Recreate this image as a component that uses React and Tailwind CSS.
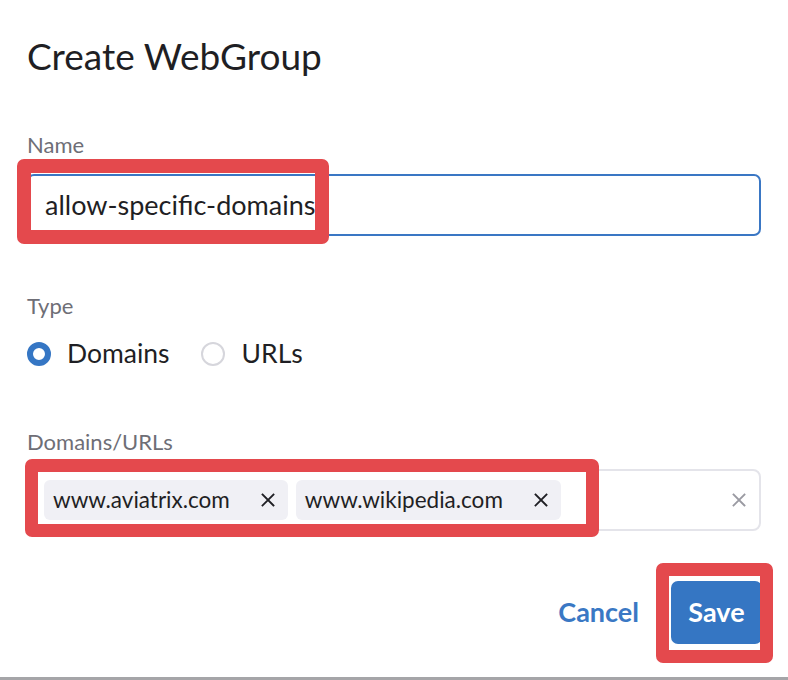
import React from "react";

function X({ className }) {
  return (
    <svg className={className} viewBox="0 0 14 14" fill="none" stroke="currentColor" strokeWidth="1.8" strokeLinecap="square">
      <path d="M1.5 1.5 L12.5 12.5 M12.5 1.5 L1.5 12.5" />
    </svg>
  );
}

function Chip({ label }) {
  return (
    <div className="flex h-[40px] items-center rounded-[6px] bg-[#f0f0f5] pl-[9px] pr-[13px]">
      <span className="text-[22.5px] text-[#1f1f24]">{label}</span>
      <X className="ml-[31px] h-[14px] w-[14px] text-[#1f1f24]" />
    </div>
  );
}

export default function App() {
  return (
    <div
      className="relative h-[680px] w-[788px] overflow-hidden bg-white"
      style={{ fontFamily: "Lato, 'Noto Sans', sans-serif" }}
    >
      <div className="flex flex-col pl-[27px] pr-[27px]">
        <h1 className="mt-[34px] text-[37px] leading-[43px] font-normal text-[#1f1f24]">
          Create WebGroup
        </h1>

        <label className="mt-[55px] text-[22px] leading-[26px] text-[#6e6e76]">Name</label>
        <div className="mt-[16px] flex h-[62px] items-center rounded-[7px] border-2 border-[#3a77c4] pl-[16px]">
          <span className="text-[27px] text-[#1f1f24]">allow-specific-domains</span>
        </div>

        <label className="mt-[57px] text-[22px] leading-[26px] text-[#6e6e76]">Type</label>
        <div className="mt-[20px] flex h-[30px] items-center">
          <span className="h-[24px] w-[24px] rounded-full border-[6px] border-[#3576c4] bg-white" />
          <span className="ml-[16px] text-[26.5px] text-[#1f1f24]">Domains</span>
          <span className="ml-[31px] h-[24px] w-[24px] rounded-full border-2 border-[#d6d6dc] bg-white" />
          <span className="ml-[17px] text-[26.5px] text-[#1f1f24]">URLs</span>
        </div>

        <label className="mt-[60px] text-[22px] leading-[26px] text-[#6e6e76]">Domains/URLs</label>
        <div className="mt-[14px] flex h-[62px] items-center rounded-[8px] border-2 border-[#e4e4ea] pl-[15px] pr-[13px]">
          <div className="flex gap-[8px]">
            <Chip label="www.aviatrix.com" />
            <Chip label="www.wikipedia.com" />
          </div>
          <X className="ml-auto h-[14px] w-[14px] text-[#9a9aa2]" />
        </div>

        <div className="mt-[50px] flex items-center justify-end">
          <button className="text-[27px] font-bold text-[#3a78c4]">Cancel</button>
          <button className="ml-[32px] mr-[-1px] flex h-[63px] w-[91px] items-center justify-center rounded-[7px] bg-[#3576c3] text-[27px] font-bold text-white">
            Save
          </button>
        </div>
      </div>

      <div className="absolute bottom-0 left-0 h-[3px] w-full bg-[#a5a5a8]" />

      <div className="pointer-events-none absolute left-[17px] top-[159px] h-[85px] w-[312px] rounded-[7px] border-[14px] border-[#e4494d]" />
      <div className="pointer-events-none absolute left-[25px] top-[459px] h-[78px] w-[574px] rounded-[7px] border-[13px] border-[#e4494d]" />
      <div className="pointer-events-none absolute left-[656px] top-[563px] h-[100px] w-[117px] rounded-[7px] border-[13px] border-[#e4494d]" />
    </div>
  );
}
